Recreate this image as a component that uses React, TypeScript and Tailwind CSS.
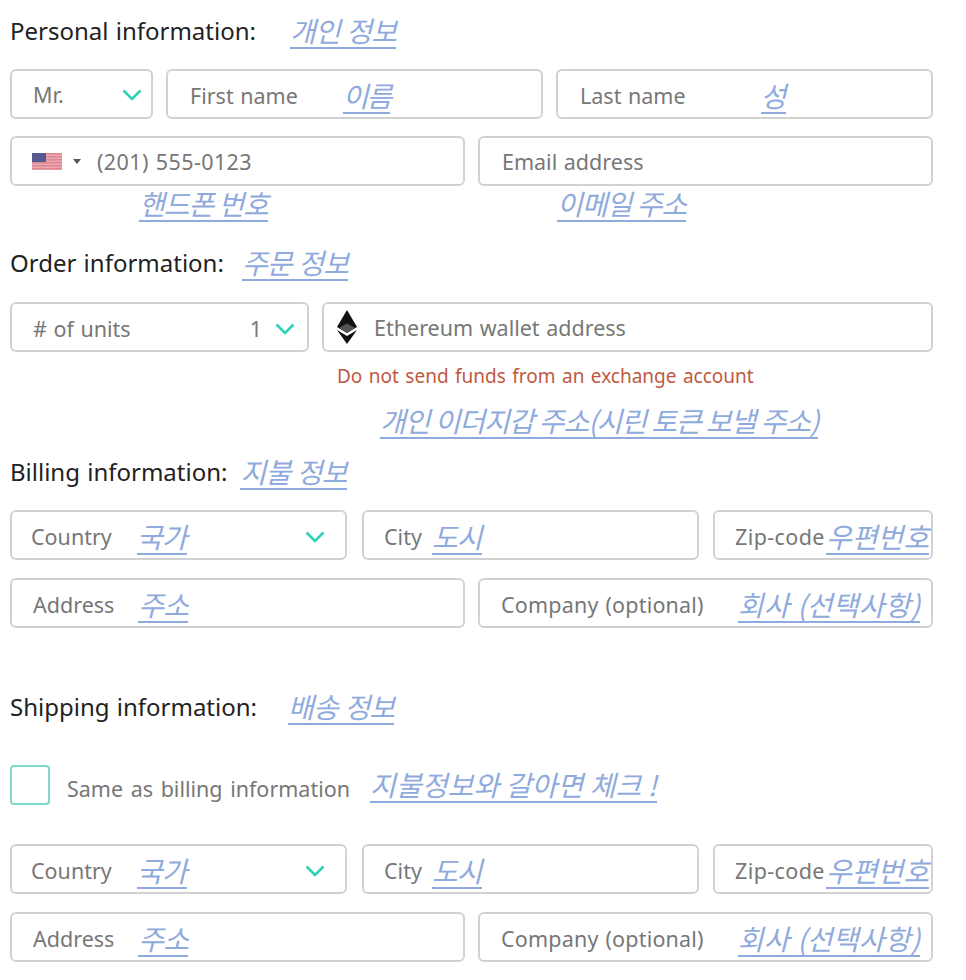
import type { ReactNode } from 'react';

const sans = 'font-["Noto_Sans","Noto_Sans_CJK_KR",sans-serif]';

function Note({
  children,
  className = '',
  tracking = 'tracking-[-0.8px]',
}: {
  children: ReactNode;
  className?: string;
  tracking?: string;
}) {
  return (
    <span
      className={`inline-block whitespace-nowrap border-b-2 border-[#8faadc] text-[28px] leading-[33px] font-normal italic text-[#8faadc] font-["Noto_Sans_CJK_KR",sans-serif] ${tracking} ${className}`}
    >
      {children}
    </span>
  );
}

function Chevron({ className = '' }: { className?: string }) {
  return (
    <svg width="20" height="14" viewBox="0 0 20 14" fill="none" className={className}>
      <path d="M1.5 2.5 L10 11 L18.5 2.5" stroke="#2ed3b7" strokeWidth="2.6" />
    </svg>
  );
}

function Field({
  className = '',
  pad = 'pt-[4px]',
  children,
}: {
  className?: string;
  pad?: string;
  children: ReactNode;
}) {
  return (
    <div
      className={`flex h-[50px] shrink-0 items-center overflow-hidden rounded-[6px] border-2 border-[#d2d2d2] bg-white text-[21.5px] [word-spacing:1px] whitespace-nowrap text-[#777777] ${pad} ${className}`}
    >
      {children}
    </div>
  );
}

function Heading({ label, note, gap }: { label: string; note: string; gap: string }) {
  return (
    <div className="flex h-[40px] items-center text-[24px] [word-spacing:1px] text-[#222222]">
      <span>{label}</span>
      <Note className={gap}>{note}</Note>
    </div>
  );
}

function EthIcon() {
  return (
    <svg width="22" height="34" viewBox="0 0 22 34" className="mb-[2px]">
      <path d="M11 0 L21 17 L11 23 L1 17 Z" fill="#111111" />
      <path d="M1 20 L11 26 L21 20 L11 34 Z" fill="#111111" />
      <path d="M3 18 L11 13.5 L19 18 L11 22.5 Z" fill="#555555" />
    </svg>
  );
}

function UsFlag() {
  return (
    <svg width="30" height="17" viewBox="0 0 30 17" className="mb-[2px]">
      <rect width="30" height="17" fill="#eda7b0" />
      {[0, 3, 6, 9, 12, 15].map((y) => (
        <rect key={y} y={y} width="30" height="1.5" fill="#dc8794" />
      ))}
      <rect width="14" height="9" fill="#565a8f" />
    </svg>
  );
}

function Address() {
  return (
    <div className="flex flex-col gap-[18px]">
      <div className="flex">
        <Field className="w-[337px] pl-[19px]">
          <span>Country</span>
          <Note className="ml-[25px]">국가</Note>
          <Chevron className="ml-auto mr-[20px]" />
        </Field>
        <Field className="ml-[15px] w-[337px] pl-[20px]">
          <span>City</span>
          <Note className="ml-[10px]">도시</Note>
        </Field>
        <Field className="ml-[14px] w-[220px] pl-[20px]">
          <span className="tracking-[0.4px]">Zip-code</span>
          <Note className="ml-[1px]" tracking="tracking-[0.1px]">우편번호</Note>
        </Field>
      </div>
      <div className="flex gap-[13px]">
        <Field className="w-[455px] pl-[21px]">
          <span>Address</span>
          <Note className="ml-[24px]">주소</Note>
        </Field>
        <Field className="w-[455px] pl-[21px]">
          <span className="tracking-[0.2px]">Company (optional)</span>
          <Note className="ml-[34px]" tracking="tracking-[0.2px]">회사 (선택사항)</Note>
        </Field>
      </div>
    </div>
  );
}

export default function App() {
  return (
    <div className={`min-h-[980px] w-[966px] bg-white pt-[11px] pl-[10px] ${sans}`}>
      <Heading label="Personal information:" note="개인 정보" gap="ml-[34px]" />

      <div className="mt-[18px] flex gap-[13px]">
        <Field className="w-[143px] pl-[21px]">
          <span className="-mt-[2px]">Mr.</span>
          <Chevron className="ml-auto mr-[9px] -mt-[2px]" />
        </Field>
        <Field className="w-[377px] pl-[22px]">
          <span>First name</span>
          <Note className="ml-[45px]" tracking="tracking-[-2px]">이름</Note>
        </Field>
        <Field className="w-[377px] pl-[22px]">
          <span>Last name</span>
          <Note className="ml-[75px]">성</Note>
        </Field>
      </div>

      <div className="mt-[17px] flex gap-[13px]">
        <Field className="w-[455px] pl-[20px]" pad="pt-[2px]">
          <UsFlag />
          <span className="mb-[2px] ml-[11px] h-0 w-0 border-x-[4px] border-t-[5px] border-x-transparent border-t-[#555555]" />
          <span className="ml-[16px] tracking-[0.4px]">(201) 555-0123</span>
        </Field>
        <Field className="w-[455px] pl-[22px]" pad="pt-[2px]">
          <span>Email address</span>
        </Field>
      </div>

      <div className="mt-[1px] flex">
        <Note className="ml-[129px]" tracking="tracking-[-1px]">핸드폰 번호</Note>
        <Note className="ml-[289px]" tracking="tracking-[-1px]">이메일 주소</Note>
      </div>

      <div className="mt-[21px]">
        <Heading label="Order information:" note="주문 정보" gap="ml-[18px]" />
      </div>

      <div className="mt-[19px] flex gap-[13px]">
        <Field className="w-[299px] pl-[21px]">
          <span># of units</span>
          <span className="ml-auto">1</span>
          <Chevron className="mr-[12px] ml-[13px]" />
        </Field>
        <Field className="w-[611px] pl-[12px]" pad="pt-[2px]">
          <EthIcon />
          <span className="ml-[16px]">Ethereum wallet address</span>
        </Field>
      </div>

      <p className="mt-[11px] ml-[327px] text-[19px] leading-[26px] [word-spacing:1.5px] text-[#c0593f]">
        Do not send funds from an exchange account
      </p>

      <div className="mt-[15px] flex">
        <Note className="ml-[370px]" tracking="tracking-[-1.05px]">개인 이더지갑 주소(시린 토큰 보낼 주소)</Note>
      </div>

      <div className="mt-[13px]">
        <Heading label="Billing information:" note="지불 정보" gap="ml-[13px]" />
      </div>

      <div className="mt-[18px]">
        <Address />
      </div>

      <div className="mt-[59px]">
        <Heading label="Shipping information:" note="배송 정보" gap="ml-[31px]" />
      </div>

      <div className="mt-[38px] flex items-center">
        <span className="h-[40px] w-[40px] rounded-[4px] border-2 border-[#7fd8cc]" />
        <span className="mt-[8px] ml-[17px] text-[21.5px] [word-spacing:2px] text-[#777777]">Same as billing information</span>
        <Note className="ml-[20px]" tracking="tracking-[0.1px]">지불정보와 갈아면 체크 !</Note>
      </div>

      <div className="mt-[39px]">
        <Address />
      </div>
    </div>
  );
}
